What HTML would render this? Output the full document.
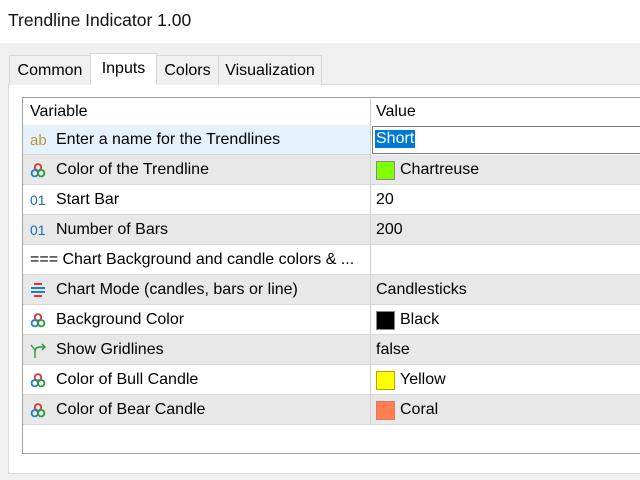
<!DOCTYPE html>
<html><head><style>
*{margin:0;padding:0;box-sizing:border-box}
body{width:640px;height:480px;background:#f0f0f0;font-family:"Liberation Sans",sans-serif;font-size:16px;color:#000;position:relative;overflow:hidden}
.title{position:absolute;left:0;top:0;width:640px;height:43px;background:#fff;font-size:17.5px;padding:10px 0 0 8px;color:#111}
.tab{position:absolute;top:55px;height:30px;border:1px solid #d9d9d9;border-bottom:none;background:#f0f0f0;font-size:16px;padding-top:6px;text-align:center}
.panel{position:absolute;left:8px;top:84px;width:640px;height:390px;background:#fff;border:1px solid #d9d9d9}
.tbl{position:absolute;left:22px;top:97px;width:630px;height:357px;border:1px solid #a0a0a0;background:#fff}
.row{position:absolute;left:0;width:630px;height:30px;border-bottom:1px solid #d8d8d8}
.g{background:#e8e8e8}
.v{position:absolute;left:33px;top:6px;white-space:nowrap}
.val{position:absolute;left:353px;top:6px;white-space:nowrap}
.div{position:absolute;left:347px;top:0;width:1px;height:326px;background:#d0d0d0}
.ic{position:absolute;left:7px;top:7px;width:16px;height:16px}
.sw{position:absolute;left:353px;top:6px;width:19px;height:19px;border:1px solid #888}
</style></head><body>
<div class="title">Trendline Indicator 1.00</div>
<div class="panel"></div>
<div class="tab" style="left:9px;width:82px">Common</div>
<div class="tab" style="left:90px;width:67px;top:53px;height:32px;background:#fff;padding-top:6px;z-index:2">Inputs</div>
<div class="tab" style="left:156px;width:63px">Colors</div>
<div class="tab" style="left:218px;width:104px">Visualization</div>
<div class="tbl">
<div class="row" style="top:0;height:27px;border-bottom:none"><span class="v" style="left:7px;top:5px">Variable</span><span class="val" style="top:5px">Value</span></div>
<div class="row" style="top:27px;background:#e5f1fb;width:347px"><svg class="ic" viewBox="0 0 16 16"><text x="0" y="13" font-size="15" fill="#b8963c" font-family="Liberation Sans">ab</text></svg><span class="v">Enter a name for the Trendlines</span></div>
<div style="position:absolute;left:349px;top:28px;width:282px;height:28px;border:1px solid #7a7a7a;background:#fff"><span style="position:absolute;left:2px;top:3px;background:#0078d7;color:#fff;padding:0 1px">Short</span></div>
<div class="row g" style="top:57px"><svg class="ic" viewBox="0 0 15 15"><circle cx="7.5" cy="5" r="3" fill="none" stroke="#d33" stroke-width="1.7"/><circle cx="4.5" cy="10.5" r="3" fill="none" stroke="#1a7fd0" stroke-width="1.7"/><circle cx="10.5" cy="10.5" r="3" fill="none" stroke="#2a9a3a" stroke-width="1.7"/></svg><span class="v">Color of the Trendline</span><div class="sw" style="background:#7fff00"></div><span class="val" style="left:377px">Chartreuse</span></div>
<div class="row" style="top:87px"><svg class="ic" viewBox="0 0 16 16"><text x="0" y="13" font-size="14" fill="#1a6ab0" font-family="Liberation Sans">01</text></svg><span class="v">Start Bar</span><span class="val">20</span></div>
<div class="row g" style="top:117px"><svg class="ic" viewBox="0 0 16 16"><text x="0" y="13" font-size="14" fill="#1a6ab0" font-family="Liberation Sans">01</text></svg><span class="v">Number of Bars</span><span class="val">200</span></div>
<div class="row" style="top:147px"><span class="v" style="left:7px">=== Chart Background and candle colors &amp; ...</span></div>
<div class="row g" style="top:177px"><svg class="ic" viewBox="0 0 16 16"><rect x="4" y="1" width="8" height="2" fill="#d33"/><rect x="1" y="5" width="14" height="2" fill="#1a7fd0"/><rect x="1" y="9" width="14" height="2" fill="#1a7fd0"/><rect x="4" y="13" width="8" height="2" fill="#d33"/></svg><span class="v">Chart Mode (candles, bars or line)</span><span class="val">Candlesticks</span></div>
<div class="row" style="top:207px"><svg class="ic" viewBox="0 0 15 15"><circle cx="7.5" cy="5" r="3" fill="none" stroke="#d33" stroke-width="1.7"/><circle cx="4.5" cy="10.5" r="3" fill="none" stroke="#1a7fd0" stroke-width="1.7"/><circle cx="10.5" cy="10.5" r="3" fill="none" stroke="#2a9a3a" stroke-width="1.7"/></svg><span class="v">Background Color</span><div class="sw" style="background:#000"></div><span class="val" style="left:377px">Black</span></div>
<div class="row g" style="top:237px"><svg class="ic" viewBox="0 0 16 16"><path d="M5 16V10Q5 5 10 5h5M12 2l3 3-3 3M1 3l4 5" fill="none" stroke="#2a9a3a" stroke-width="1.4"/></svg><span class="v">Show Gridlines</span><span class="val">false</span></div>
<div class="row" style="top:267px"><svg class="ic" viewBox="0 0 15 15"><circle cx="7.5" cy="5" r="3" fill="none" stroke="#d33" stroke-width="1.7"/><circle cx="4.5" cy="10.5" r="3" fill="none" stroke="#1a7fd0" stroke-width="1.7"/><circle cx="10.5" cy="10.5" r="3" fill="none" stroke="#2a9a3a" stroke-width="1.7"/></svg><span class="v">Color of Bull Candle</span><div class="sw" style="background:#ffff00;border-color:#aa0"></div><span class="val" style="left:377px">Yellow</span></div>
<div class="row g" style="top:297px"><svg class="ic" viewBox="0 0 15 15"><circle cx="7.5" cy="5" r="3" fill="none" stroke="#d33" stroke-width="1.7"/><circle cx="4.5" cy="10.5" r="3" fill="none" stroke="#1a7fd0" stroke-width="1.7"/><circle cx="10.5" cy="10.5" r="3" fill="none" stroke="#2a9a3a" stroke-width="1.7"/></svg><span class="v">Color of Bear Candle</span><div class="sw" style="background:#ff7f50;border-color:#d76"></div><span class="val" style="left:377px">Coral</span></div>
<div class="div"></div>
</div>
</body></html>
